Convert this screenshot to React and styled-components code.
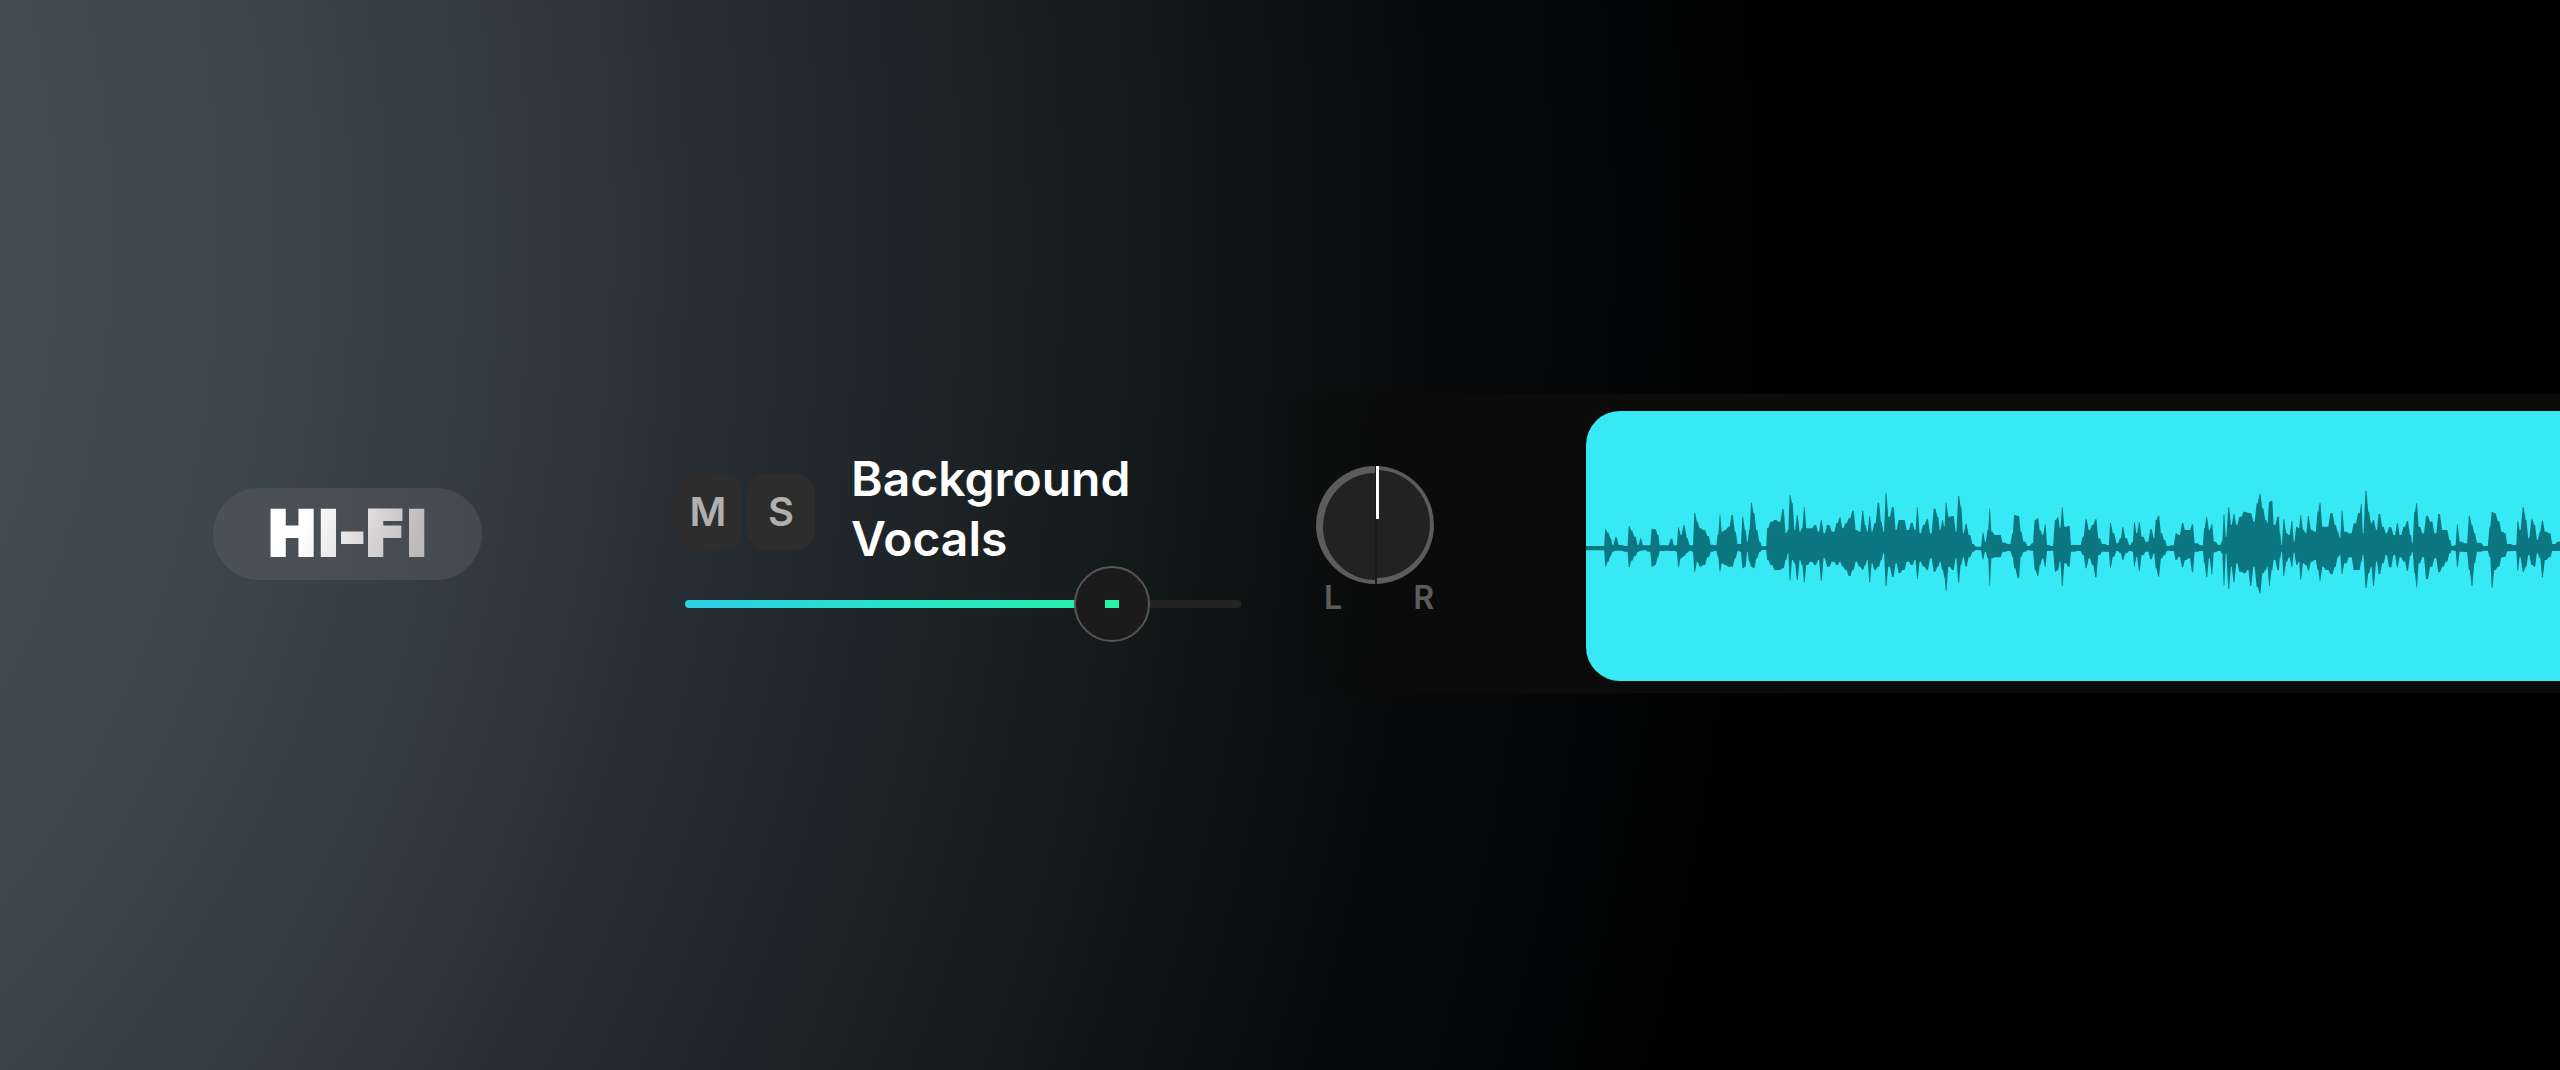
import React, { useId, useState } from "react";
import styled, { createGlobalStyle } from "styled-components";

const GlobalStyle = createGlobalStyle`
  *, *::before, *::after { box-sizing: border-box; }
  body { margin: 0; background: #000; }
`;

const sans = `Inter, "Liberation Sans", sans-serif`;

const Page = styled.main`
  display: flex;
  align-items: center;
  min-height: 100vh;
  padding-top: 16px;
  overflow: hidden;
  font-family: ${sans};
  background: radial-gradient(
    ellipse 94% 268% at -24% 22%,
    #424e53 26%,
    #3b464b 37%,
    #363e46 43%,
    #30373f 49%,
    #282f35 54%,
    #21272a 61%,
    #1a2022 68%,
    #131819 74%,
    #0e1112 79%,
    #090a0b 85%,
    #040506 93%,
    #000 102%
  );
`;

const Track = styled.section`
  display: flex;
  align-items: center;
  width: 100%;
  padding: 17px 0 12px 213px;
  background: linear-gradient(90deg, transparent 49%, #0b0b0b 56%);
`;

const Badge = styled.div`
  display: flex;
  flex: none;
  align-items: center;
  justify-content: center;
  width: 269px;
  height: 92px;
  margin: 0 192px 24px 0;
  border-radius: 46px;
  background: linear-gradient(90deg, #4b5256, #454a51);
`;

const BadgeText = styled.span`
  font-family: "DejaVu Sans", sans-serif;
  font-size: 60px;
  font-weight: 700;
  line-height: 64px;
  color: transparent;
  background: linear-gradient(110deg, #fff 25%, #bdb9b9 90%);
  background-clip: text;
  -webkit-text-stroke: 4px transparent;
`;

const Channel = styled.div`
  display: flex;
  flex: none;
  flex-direction: column;
  width: 567px;
`;

const ChannelHead = styled.div`
  display: flex;
  align-items: center;
  gap: 36px;
`;

const Toggles = styled.div`
  display: flex;
  gap: 5px;
  margin-top: 5px;
`;

const ToggleButton = styled.button`
  width: 68px;
  height: 76px;
  padding: 0;
  border: 0;
  border-radius: 20px;
  background: ${(p) => (p.$on ? "#4a4a4a" : "#2e2d2d")};
  color: #b0b0b0;
  font-family: ${sans};
  font-size: 40px;
  font-weight: 600;
  line-height: 48px;
  cursor: pointer;
`;

const Title = styled.h1`
  margin: 0;
  color: #fff;
  font-size: 48px;
  font-weight: 600;
  line-height: 60px;
`;

const Volume = styled.input`
  appearance: none;
  width: 556px;
  height: 76px;
  margin: -3px 0 0 11px;
  background: none;
  cursor: pointer;

  &::-webkit-slider-runnable-track {
    height: 8px;
    border-radius: 4px;
    background:
      linear-gradient(90deg, #2bcfe8, #25f5a5) 0 0 / var(--level) 100% no-repeat,
      #242424;
  }

  &::-webkit-slider-thumb {
    appearance: none;
    width: 76px;
    height: 76px;
    margin-top: -34px;
    border: 2px solid #555;
    border-radius: 50%;
    background: linear-gradient(#25f5a5, #25f5a5) center / 14px 8px no-repeat #1b1b1b;
  }
`;

const Pan = styled.div`
  display: flex;
  flex: none;
  flex-direction: column;
  width: 118px;
  margin: 0 152px 14px 75px;
`;

const Knob = styled.svg`
  display: block;
  width: 118px;
  height: 118px;
`;

const PanLabels = styled.div`
  display: flex;
  justify-content: space-between;
  padding-left: 8px;
  color: #5c5c5c;
  font-size: 32px;
  font-weight: 600;
  line-height: 28px;
`;

const Clip = styled.div`
  display: flex;
  flex: 1;
  align-items: center;
  min-width: 0;
  height: 270px;
  overflow: hidden;
  border-radius: 34px 0 0 34px;
  background: #37e9f5;
`;

const Wave = styled.svg`
  display: block;
  width: 100%;
  fill: #0c7780;
`;

// Envelope of the recording: x, upper edge, lower edge.
const intro = [
  18,228,241, 72,228,241, 76,178,290, 84,188,275, 92,205,258, 98,225,245, 108,202,242, 118,225,242,
  142,228,245, 147,168,292, 155,182,272, 165,200,258, 175,225,245, 182,205,242, 190,226,241,
  210,226,245, 216,176,290, 226,178,285, 234,195,262, 240,226,243, 262,226,242, 276,206,243,
  282,226,242, 290,226,245, 295,172,292, 303,195,265, 312,166,258, 322,205,248, 330,226,242,
  338,226,245, 344,128,305, 352,155,275, 360,175,290, 372,180,285, 385,198,262, 394,224,245,
  408,226,242, 414,195,260, 420,135,305, 426,185,280, 436,180,285, 446,170,290, 457,135,290,
  466,185,265, 474,222,243, 482,222,245, 488,140,295, 496,180,290, 502,215,245, 508,180,275,
  514,98,290, 522,130,295, 530,180,265, 540,215,246, 546,229,240, 558,229,240, 562,175,270,
  574,155,285, 586,150,300, 598,155,300, 610,118,295, 618,190,270, 624,180,250, 630,75,332,
  637,100,270, 644,180,280, 652,136,330, 660,185,270, 666,175,285, 673,112,337, 680,175,285,
  694,175,275, 706,165,285, 716,185,270, 724,150,332, 732,190,265, 744,165,290, 760,185,275,
  772,160,285, 780,142,275, 788,175,290, 798,160,300, 808,145,318, 820,122,300, 828,180,275,
  840,185,290, 848,122,300, 856,165,285, 862,185,270, 869,138,337, 876,185,280, 884,160,300,
  896,98,290, 904,155,270, 911,185,250, 918,68,347, 926,140,290, 940,112,320, 948,180,280,
  958,150,310, 970,150,300, 984,180,275, 996,158,285, 1006,180,270,
];

const middle = [
  22,112,327, 30,190,275, 42,165,290, 52,148,300, 62,190,265, 74,116,305, 84,140,290, 90,180,275,
  98,150,300, 103,170,320, 108,98,362, 116,140,290, 130,138,300, 138,185,265, 146,78,338,
  153,110,285, 160,190,262, 168,163,290, 178,195,262, 190,222,245, 198,230,240, 212,230,241,
  219,188,268, 226,215,245, 234,180,265, 239,115,347, 245,185,265, 256,195,262, 270,195,262,
  280,218,245, 300,222,243, 308,190,260, 313,135,295, 326,138,324, 333,185,260, 342,215,245,
  356,228,241, 368,220,243, 375,150,300, 384,145,318, 390,180,285, 398,195,265, 406,163,290,
  412,225,243, 428,228,242, 436,150,305, 444,142,300, 450,175,275, 457,112,347, 464,170,280,
  478,168,290, 484,225,245, 510,225,243, 520,200,255, 528,148,295, 538,180,265, 548,165,285,
  558,148,322, 566,205,255, 580,222,245, 596,225,245, 601,158,293, 610,190,260, 622,220,243,
  632,205,250, 638,172,270, 648,205,250, 660,225,243, 668,215,245, 673,157,290, 680,190,260,
  688,157,302, 696,200,255, 712,215,245, 724,178,268, 732,205,250, 738,150,295, 746,137,320,
  754,190,265, 764,210,255, 772,228,242, 790,226,243, 798,190,270, 808,195,260, 818,158,292,
  826,180,270, 838,180,265, 848,163,307, 855,220,245, 878,226,243, 883,175,280, 890,142,322,
  898,180,265, 906,163,312, 912,215,247, 930,225,243, 936,215,250, 942,132,347, 948,200,250,
  956,112,357,
];

const ending = [
  4,165,290, 12,132,337, 20,165,280, 30,140,305, 45,125,310, 54,128,300, 62,130,347, 72,155,290,
  82,100,350, 90,72,370, 98,115,310, 108,150,300, 112,160,290, 118,95,347, 126,92,300,
  132,165,270, 146,140,300, 150,190,265, 155,225,245, 161,148,318, 170,190,275, 178,195,262,
  186,153,292, 192,215,248, 200,170,285, 207,175,275, 212,136,330, 220,180,280, 228,190,285,
  235,138,302, 244,180,275, 256,185,270, 264,125,300, 270,98,332, 278,170,290, 290,170,300,
  306,130,312, 316,165,290, 324,185,262, 330,205,255, 336,122,312, 344,185,280, 362,190,262,
  374,160,300, 388,130,300, 394,102,275, 399,190,255, 408,62,354, 416,125,310, 424,160,290,
  430,150,347, 440,180,275, 447,132,312, 460,170,280, 468,190,255, 480,172,292, 494,195,255,
  502,160,292, 510,195,262, 524,170,275, 532,153,302, 542,195,258, 547,220,245, 554,125,310,
  560,100,352, 567,170,280, 580,190,262, 590,138,327, 604,155,290, 616,190,265, 628,132,307,
  638,180,290, 650,180,275, 660,210,250, 666,228,241, 676,226,243, 682,163,292, 690,215,245,
  710,220,246, 718,137,300, 726,165,347, 734,190,280, 742,218,245, 772,228,242, 780,170,262,
  786,126,354, 794,130,300, 806,153,290, 816,185,262, 826,190,260, 832,222,244, 858,225,243,
  863,153,302, 870,180,262, 880,112,305, 888,150,290, 896,205,255, 906,148,285, 914,165,290,
  922,210,250, 930,185,265, 937,152,322, 946,185,270, 960,190,262, 968,222,243, 990,215,243,
];

const sections = [
  [intro, -18],
  [middle, 972],
  [ending, 1932],
];

// Each sample is a short bar; neighbouring bars join with a steep ramp.
function buildWavePath() {
  const samples = [];
  sections.forEach(([values, start]) => {
    for (let i = 0; i < values.length; i += 3) {
      samples.push({ x: values[i] + start, top: values[i + 1], bottom: values[i + 2] });
    }
  });
  const upper = [];
  const lower = [];
  const add = (x, sample) => {
    upper.push(`${x},${sample.top}`);
    lower.unshift(`${x},${sample.bottom}`);
  };
  samples.forEach((sample, i) => {
    const next = samples[i + 1];
    add(sample.x, sample);
    if (next) {
      const middleX = (sample.x + next.x) / 2;
      const ramp = Math.min(3, (next.x - sample.x) / 3);
      add(middleX - ramp, sample);
      add(middleX + ramp, next);
    }
  });
  return `M${upper.join("L")}L${lower.join("L")}Z`;
}

const wavePath = buildWavePath();

function Toggle({ label, name }) {
  const [on, setOn] = useState(false);
  return (
    <ToggleButton type="button" aria-label={name} aria-pressed={on} $on={on} onClick={() => setOn(!on)}>
      {label}
    </ToggleButton>
  );
}

function VolumeSlider() {
  const [value, setValue] = useState(81);
  return (
    <Volume
      type="range"
      min="0"
      max="100"
      aria-label="Volume"
      value={value}
      onChange={(e) => setValue(Number(e.target.value))}
      style={{ "--level": `${value}%` }}
    />
  );
}

function PanKnob() {
  const id = useId();
  return (
    <Pan>
      <Knob
        viewBox="0 0 118 118"
        role="slider"
        tabIndex={0}
        aria-label="Pan"
        aria-valuemin={-100}
        aria-valuemax={100}
        aria-valuenow={0}
        aria-describedby={id}
      >
        <circle cx="59" cy="59" r="59" fill="#5c5c5c" />
        <path d="M59 7A52 53.5 0 0 0 59 114Z" fill="#222" />
        <path d="M60 4A54 54 0 0 1 60 112Z" fill="#222" />
        <rect x="59" y="0" width="2" height="118" fill="#191919" />
        <rect x="60" y="0" width="3" height="53" fill="#fff" />
      </Knob>
      <PanLabels id={id}>
        <span>L</span>
        <span>R</span>
      </PanLabels>
    </Pan>
  );
}

export default function App() {
  return (
    <>
      <GlobalStyle />
      <Page>
        <Track aria-label="Background Vocals">
          <Badge>
            <BadgeText>HI-FI</BadgeText>
          </Badge>
          <Channel>
            <ChannelHead>
              <Toggles>
                <Toggle label="M" name="Mute" />
                <Toggle label="S" name="Solo" />
              </Toggles>
              <Title>
                Background
                <br />
                Vocals
              </Title>
            </ChannelHead>
            <VolumeSlider />
          </Channel>
          <PanKnob />
          <Clip>
            <Wave viewBox="0 3 2922 450" role="img" aria-label="Waveform">
              <path d={wavePath} />
            </Wave>
          </Clip>
        </Track>
      </Page>
    </>
  );
}
